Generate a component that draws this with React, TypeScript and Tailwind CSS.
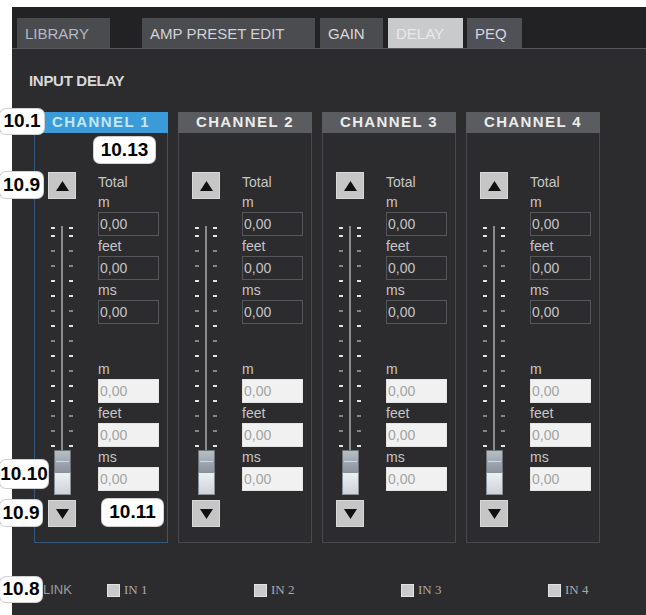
import React from "react";

interface Channel {
  id: number;
  active: boolean;
}

const channels: Channel[] = [
  { id: 1, active: true },
  { id: 2, active: false },
  { id: 3, active: false },
  { id: 4, active: false },
];

const tickOffsets = [5, 13, 28, 43, 58, 73, 88, 103, 118, 133, 148, 163, 178, 193, 208, 223];
const brightTicks = [0, 1, 4, 5, 7, 9, 11, 12, 15];

const Arrow: React.FC<{ down?: boolean }> = ({ down }) => (
  <button className="w-[28px] h-[27px] bg-[#c6c6c6] border border-[#d8d8d8] flex items-center justify-center">
    <svg width="13" height="10" viewBox="0 0 13 10">
      {down ? <polygon points="0,0 13,0 6.5,10" fill="#111" /> : <polygon points="6.5,0 13,10 0,10" fill="#111" />}
    </svg>
  </button>
);

const Fader: React.FC = () => (
  <svg width="28" height="276" viewBox="0 0 28 276" className="block">
    <defs>
      <linearGradient id="knobTop" x1="0" y1="0" x2="0" y2="1">
        <stop offset="0" stopColor="#b9bec6" />
        <stop offset="1" stopColor="#8b929c" />
      </linearGradient>
      <linearGradient id="knobBottom" x1="0" y1="0" x2="0" y2="1">
        <stop offset="0" stopColor="#eef1f4" />
        <stop offset="1" stopColor="#cdd2d8" />
      </linearGradient>
    </defs>
    <rect x="13" y="4" width="2" height="266" fill="#8c8c8c" />
    {tickOffsets.map((y, i) => {
      const c = brightTicks.includes(i) ? "#e2e2e2" : "#858585";
      return (
        <g key={y}>
          <rect x="3" y={y} width="4" height="2" fill={c} />
          <rect x="21" y={y} width="4" height="2" fill={c} />
        </g>
      );
    })}
    {/* fader knob */}
    <rect x="6.5" y="228.5" width="16" height="22" fill="url(#knobTop)" stroke="#6f747b" />
    <rect x="6.5" y="250.5" width="16" height="22" fill="url(#knobBottom)" stroke="#8a9097" />
    <rect x="8" y="239" width="13" height="1" fill="#d6dade" />
  </svg>
);

const Label: React.FC<{ text: string }> = ({ text }) => (
  <div className="h-[20px] leading-[20px] text-[14px] text-[#c6c6c6]">{text}</div>
);

const Field: React.FC<{ light?: boolean }> = ({ light }) => (
  <div
    className={`w-[61px] h-[24px] leading-[22px] pl-[1px] text-[14px] border ${
      light ? "bg-[#f1f1f1] border-[#e4e4e4] text-[#a3a3a3]" : "border-[#56565a] text-[#c4c4c4]"
    }`}
  >
    0,00
  </div>
);

const ChannelBox: React.FC<{ ch: Channel }> = ({ ch }) => (
  <div
    className={`w-[134px] h-[431px] flex flex-col border ${
      ch.active ? "border-[#34597c]" : "border-[#4a4a4e]"
    }`}
  >
    <div
      className={`h-[21px] -mx-px -mt-px flex items-center justify-center text-[15px] font-bold tracking-[1.4px] ${
        ch.active ? "bg-[#3b9bd9] text-[#c4e6fb]" : "bg-[#5b5c60] text-[#ececec]"
      }`}
    >
      CHANNEL {ch.id}
    </div>
    <div className="flex pt-[39px] pl-[13px]">
      {/* fader column */}
      <div className="flex flex-col w-[28px]">
        <Arrow />
        <div className="mt-[23px]">
          <Fader />
        </div>
        <div className="mt-[2px]">
          <Arrow down />
        </div>
      </div>
      {/* values column */}
      <div className="ml-[22px] flex flex-col">
        <Label text="Total" />
        <Label text="m" />
        <Field />
        <Label text="feet" />
        <Field />
        <Label text="ms" />
        <Field />
        <div className="h-[35px]" />
        <Label text="m" />
        <Field light />
        <Label text="feet" />
        <Field light />
        <Label text="ms" />
        <Field light />
      </div>
    </div>
  </div>
);

const Badge: React.FC<{ text: string; className: string }> = ({ text, className }) => (
  <div
    className={`absolute bg-white rounded-[6px] flex items-center justify-center text-[19px] font-bold text-black shadow-[0_0_0_1px_#d0d0d0] ${className}`}
  >
    {text}
  </div>
);

const tabs = [
  { label: "LIBRARY", cls: "w-[93px] bg-[#4a4b4f] text-[#b4b9c4]" },
  { label: "AMP PRESET EDIT", cls: "w-[173px] ml-[32px] bg-[#4b4c50] text-[#d2d2d6]" },
  { label: "GAIN", cls: "w-[63px] ml-[5px] bg-[#4b4c50] text-[#d8d8d8]" },
  { label: "DELAY", cls: "w-[75px] ml-[5px] bg-[#c9cacb] text-[#e9e9e9]" },
  { label: "PEQ", cls: "w-[55px] ml-[4px] bg-[#505157] text-[#d4d4e2]" },
];

export default function App() {
  return (
    <div
      className="relative w-[646px] h-[615px] bg-white overflow-hidden"
      style={{ fontFamily: '"Liberation Sans", Arial, sans-serif' }}
    >
      <div className="ml-[12px] mt-[7px] h-[608px] bg-[#2c2c2f] flex flex-col">
        {/* Tab bar */}
        <div className="bg-[#222225] pt-[11px] pl-[5px] flex border-b border-[#55565a]">
          {tabs.map((t) => (
            <div key={t.label} className={`h-[30px] pl-[8px] pt-[3px] flex items-center text-[15px] ${t.cls}`}>
              {t.label}
            </div>
          ))}
        </div>

        <div className="flex flex-1">
          <div className="flex-1 flex flex-col">
            <div className="mt-[23px] ml-[17px] h-[18px] leading-[18px] text-[15px] font-bold text-[#d9d9d9] tracking-[-0.3px]">
              INPUT DELAY
            </div>

            {/* Channels */}
            <div className="mt-[22px] ml-[22px] flex gap-[10px]">
              {channels.map((ch) => (
                <ChannelBox key={ch.id} ch={ch} />
              ))}
            </div>

            {/* Link row */}
            <div className="mt-[40px] ml-[31px] flex items-center h-[14px]">
              <div className="w-[64px] text-[13px] text-[#9c9c9c]">LINK</div>
              {[1, 2, 3, 4].map((n) => (
                <div key={n} className="w-[147px] flex items-center gap-[4px]">
                  <div className="w-[13px] h-[13px] bg-[#cacaca] border border-[#e2e2e2]" />
                  <span
                    className="text-[13px] text-[#aaaaaa]"
                    style={{ fontFamily: '"Liberation Serif", serif' }}
                  >
                    IN {n}
                  </span>
                </div>
              ))}
            </div>
          </div>

          {/* Scrollbar */}
          <div className="w-[2px] mt-[23px] mb-[12px] mr-[9px] bg-[#838386]" />
        </div>
      </div>

      {/* Annotation callouts */}
      <Badge text="10.1" className="left-0 top-[109px] w-[44px] h-[25px]" />
      <Badge text="10.13" className="left-[94px] top-[137px] w-[61px] h-[26px]" />
      <Badge text="10.9" className="left-0 top-[172px] w-[43px] h-[26px]" />
      <Badge text="10.10" className="left-0 top-[460px] w-[48px] h-[28px]" />
      <Badge text="10.9" className="left-0 top-[500px] w-[42px] h-[26px]" />
      <Badge text="10.11" className="left-[102px] top-[499px] w-[61px] h-[27px]" />
      <Badge text="10.8" className="left-0 top-[577px] w-[42px] h-[25px]" />
    </div>
  );
}
